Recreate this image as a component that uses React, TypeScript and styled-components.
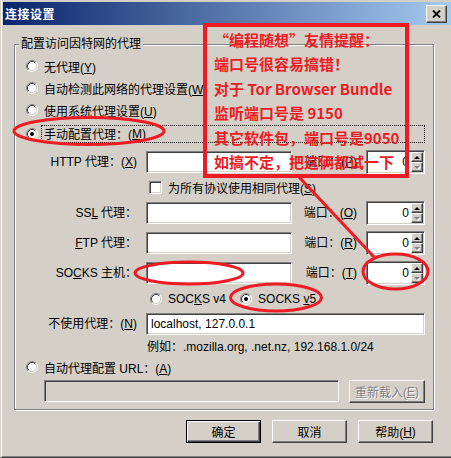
import React from 'react';
import styled, { createGlobalStyle } from 'styled-components';

const GlobalStyle = createGlobalStyle`
  html, body {
    margin: 0;
    padding: 0;
    background: #d4d0c8;
  }
  body {
    font-family: 'Liberation Sans', 'Noto Sans CJK SC', sans-serif;
    font-size: 12px;
    color: #000;
  }
`;

const Window = styled.div`
  position: relative;
  width: 451px;
  height: 458px;
  box-sizing: border-box;
  background: #d4d0c8;
  border-left: 1px solid #d4d0c8;
  border-bottom: 1px solid #404040;
  box-shadow: inset 1px 0 #fff, inset 0 -1px #808080;
  padding: 2px 0 0 2px;
  display: flex;
  flex-direction: column;
  overflow: hidden;
`;

const TitleBar = styled.div`
  height: 23px;
  display: flex;
  align-items: center;
  justify-content: space-between;
  padding: 0 4px 0 2px;
  background: linear-gradient(90deg, #0a246a, #a6caf0);
`;

const TitleText = styled.span`
  color: #fff;
  font-weight: 700;
  font-size: 12px;
  font-family: 'Noto Sans CJK SC', sans-serif;
  letter-spacing: 0.5px;
`;

const CloseButton = styled.div`
  width: 21px;
  height: 18px;
  box-sizing: border-box;
  background: #d4d0c8;
  border: 1px solid;
  border-color: #fff #404040 #404040 #fff;
  box-shadow: inset -1px -1px #808080;
  display: flex;
  align-items: center;
  justify-content: center;
`;

const Body = styled.div`
  padding: 19px 0 0 11px;
  display: flex;
  flex-direction: column;
`;

const GroupBox = styled.div`
  position: relative;
  width: 420px;
  box-sizing: border-box;
  border: 1px solid #808080;
  box-shadow: inset 1px 1px #fff, 1px 1px #fff;
  padding: 10px 8px 7px 11px;
  display: flex;
  flex-direction: column;
`;

const Legend = styled.span`
  position: absolute;
  top: -8px;
  left: 4px;
  padding: 0 2px;
  line-height: 14px;
  background: #d4d0c8;
`;

const RadioLine = styled.div<{ $h?: number; $mt?: number }>`
  display: flex;
  align-items: center;
  gap: 6px;
  height: ${(p) => p.$h ?? 22}px;
  margin-top: ${(p) => p.$mt ?? 0}px;
  white-space: nowrap;
`;

const ManualLine = styled.div`
  display: flex;
  align-items: center;
  height: 19px;
  margin-top: 3px;
`;

const FocusLabel = styled.span`
  flex: 1;
  margin-left: 3px;
  height: 18px;
  box-sizing: border-box;
  border: 1px dotted #000;
  padding-left: 2px;
  display: flex;
  align-items: center;
  white-space: nowrap;
`;

const RadioIcon = styled.svg`
  flex: none;
  display: block;
`;

const Key = styled.span`
  text-decoration: underline;
  text-underline-offset: 1px;
`;

const ProxyGrid = styled.div`
  display: grid;
  grid-template-columns: 111px 146px 56px 59px;
  grid-template-rows: 24px 15px 24px 24px 24px 16px 22px 13px;
  column-gap: 9px;
  row-gap: 6px;
  margin-top: 7px;
  align-items: center;
`;

const FieldLabel = styled.span`
  text-align: right;
  white-space: nowrap;
  line-height: 14px;
`;

const TextBox = styled.input<{ $disabled?: boolean }>`
  height: 22px;
  box-sizing: border-box;
  margin: 0;
  padding: 0 4px;
  font: inherit;
  color: #000;
  background: ${(p) => (p.$disabled ? '#d4d0c8' : '#fff')};
  border: 1px solid;
  border-color: #808080 #fff #fff #808080;
  box-shadow: inset 1px 1px #404040, inset -1px -1px #d4d0c8;
  outline: none;
  min-width: 0;
`;

const WideBox = styled(TextBox)`
  grid-column: 2 / -1;
`;

const PortBox = styled.div`
  height: 24px;
  box-sizing: border-box;
  display: flex;
  background: #fff;
  border: 1px solid;
  border-color: #808080 #fff #fff #808080;
  box-shadow: inset 1px 1px #404040, inset -1px -1px #d4d0c8;
  padding: 1px;
`;

const PortValue = styled.span`
  flex: 1;
  text-align: right;
  padding-right: 2px;
  line-height: 20px;
`;

const SpinColumn = styled.div`
  width: 12px;
  display: flex;
  flex-direction: column;
`;

const SpinButton = styled.div`
  flex: 1;
  box-sizing: border-box;
  background: #d4d0c8;
  border: 1px solid;
  border-color: #fff #404040 #404040 #fff;
  box-shadow: inset -1px -1px #808080;
  display: flex;
  align-items: center;
  justify-content: center;
`;

const Arrow = styled.span<{ $down?: boolean }>`
  width: 0;
  height: 0;
  border-left: 3px solid transparent;
  border-right: 3px solid transparent;
  ${(p) =>
    p.$down
      ? 'border-top: 3px solid #808080; filter: drop-shadow(1px 1px 0 #fff);'
      : 'border-bottom: 3px solid #000;'}
`;

const CheckLine = styled.div`
  grid-column: 2 / -1;
  display: flex;
  align-items: center;
  gap: 6px;
  padding-left: 3px;
  white-space: nowrap;
`;

const CheckBox = styled.span`
  width: 13px;
  height: 13px;
  box-sizing: border-box;
  background: #fff;
  border: 1px solid;
  border-color: #808080 #fff #fff #808080;
  box-shadow: inset 1px 1px #404040, inset -1px -1px #d4d0c8;
`;

const VersionLine = styled.div`
  grid-column: 2 / -1;
  display: flex;
  align-items: center;
  gap: 14px;
  padding-left: 4px;
`;

const VersionOption = styled.span`
  display: inline-flex;
  align-items: center;
  gap: 6px;
  white-space: nowrap;
`;

const Example = styled.span`
  grid-column: 2 / -1;
  padding-left: 1px;
  line-height: 13px;
  white-space: nowrap;
`;

const UrlLine = styled.div`
  display: flex;
  gap: 10px;
  height: 22px;
  margin-top: 6px;
  padding-left: 18px;
`;

const UrlBox = styled(TextBox)`
  width: 295px;
  flex: none;
`;

const ClassicButton = styled.div<{ $default?: boolean; $disabled?: boolean; $w?: number }>`
  width: ${(p) => p.$w ?? 75}px;
  height: 23px;
  flex: none;
  box-sizing: border-box;
  display: flex;
  align-items: center;
  justify-content: center;
  background: #d4d0c8;
  white-space: nowrap;
  color: ${(p) => (p.$disabled ? '#808080' : '#000')};
  text-shadow: ${(p) => (p.$disabled ? '1px 1px 0 #fff' : 'none')};
  border: 1px solid;
  border-color: ${(p) => (p.$default ? '#000' : '#fff #404040 #404040 #fff')};
  box-shadow: ${(p) =>
    p.$default
      ? 'inset 1px 1px #fff, inset -1px -1px #404040, inset -2px -2px #808080'
      : 'inset -1px -1px #808080'};
`;

const ButtonRow = styled.div`
  width: 420px;
  box-sizing: border-box;
  display: flex;
  justify-content: flex-end;
  gap: 11px;
  padding-right: 1px;
  margin-top: 10px;
`;

const Note = styled.div`
  position: absolute;
  left: 202px;
  top: 23px;
  width: 206px;
  height: 155px;
  box-sizing: border-box;
  border: 4px solid #ed1c24;
  padding: 1px 0 0 7px;
  font-family: 'Noto Sans CJK SC', sans-serif;
  font-weight: 700;
  font-size: 15px;
  line-height: 24.4px;
  color: #ed1c24;
  white-space: nowrap;
`;

const Marks = styled.svg`
  position: absolute;
  left: 0;
  top: 0;
  pointer-events: none;
`;

function Radio({ checked }: { checked?: boolean }) {
  return (
    <RadioIcon width="12" height="12" viewBox="0 0 12 12">
      <circle cx="6" cy="6" r="4.5" fill="#fff" />
      <path d="M2.11 9.89A5.5 5.5 0 0 1 9.89 2.11" stroke="#808080" fill="none" />
      <path d="M9.89 2.11A5.5 5.5 0 0 1 2.11 9.89" stroke="#fff" fill="none" />
      <path d="M2.82 9.18A4.5 4.5 0 0 1 9.18 2.82" stroke="#404040" fill="none" />
      <path d="M9.18 2.82A4.5 4.5 0 0 1 2.82 9.18" stroke="#d4d0c8" fill="none" />
      {checked && <circle cx="6" cy="6" r="2" fill="#000" />}
    </RadioIcon>
  );
}

function Port({ label }: { label: React.ReactNode }) {
  return (
    <>
      <FieldLabel>{label}</FieldLabel>
      <PortBox>
        <PortValue>0</PortValue>
        <SpinColumn>
          <SpinButton>
            <Arrow />
          </SpinButton>
          <SpinButton>
            <Arrow $down />
          </SpinButton>
        </SpinColumn>
      </PortBox>
    </>
  );
}

export default function App() {
  return (
    <>
      <GlobalStyle />
      <Window>
        <TitleBar>
          <TitleText>连接设置</TitleText>
          <CloseButton>
            <svg width="9" height="8" viewBox="0 0 9 8">
              <path d="M1 0.5L8 7.5M8 0.5L1 7.5" stroke="#000" strokeWidth="1.8" />
            </svg>
          </CloseButton>
        </TitleBar>

        <Body>
          <GroupBox>
            <Legend>配置访问因特网的代理</Legend>
            <RadioLine>
              <Radio />
              <span>
                无代理(<Key>Y</Key>)
              </span>
            </RadioLine>
            <RadioLine>
              <Radio />
              <span>
                自动检测此网络的代理设置(<Key>W</Key>)
              </span>
            </RadioLine>
            <RadioLine>
              <Radio />
              <span>
                使用系统代理设置(<Key>U</Key>)
              </span>
            </RadioLine>
            <ManualLine>
              <Radio checked />
              <FocusLabel>
                手动配置代理：(<Key>M</Key>)
              </FocusLabel>
            </ManualLine>

            <ProxyGrid>
              <FieldLabel>
                HTTP 代理：(<Key>X</Key>)
              </FieldLabel>
              <TextBox readOnly />
              <Port label={<>端口：(<Key>P</Key>)</>} />

              <CheckLine>
                <CheckBox />
                <span>
                  为所有协议使用相同代理(<Key>S</Key>)
                </span>
              </CheckLine>

              <FieldLabel>
                SS<Key>L</Key> 代理：
              </FieldLabel>
              <TextBox readOnly />
              <Port label={<>端口：(<Key>O</Key>)</>} />

              <FieldLabel>
                <Key>F</Key>TP 代理：
              </FieldLabel>
              <TextBox readOnly />
              <Port label={<>端口：(<Key>R</Key>)</>} />

              <FieldLabel>
                SO<Key>C</Key>KS 主机：
              </FieldLabel>
              <TextBox readOnly />
              <Port label={<>端口：(<Key>T</Key>)</>} />

              <VersionLine>
                <VersionOption>
                  <Radio />
                  <span>
                    SOC<Key>K</Key>S v4
                  </span>
                </VersionOption>
                <VersionOption>
                  <Radio checked />
                  <span>
                    SOCKS <Key>v</Key>5
                  </span>
                </VersionOption>
              </VersionLine>

              <FieldLabel>
                不使用代理：(<Key>N</Key>)
              </FieldLabel>
              <WideBox readOnly defaultValue="localhost, 127.0.0.1" />

              <Example>例如：.mozilla.org, .net.nz, 192.168.1.0/24</Example>
            </ProxyGrid>

            <RadioLine $h={14} $mt={6}>
              <Radio />
              <span>
                自动代理配置 URL：(<Key>A</Key>)
              </span>
            </RadioLine>
            <UrlLine>
              <UrlBox readOnly $disabled />
              <ClassicButton $disabled $w={76}>
                重新载入(<Key>E</Key>)
              </ClassicButton>
            </UrlLine>
          </GroupBox>

          <ButtonRow>
            <ClassicButton $default>确定</ClassicButton>
            <ClassicButton>取消</ClassicButton>
            <ClassicButton>
              帮助(<Key>H</Key>)
            </ClassicButton>
          </ButtonRow>
        </Body>

        <Note>
          <div>“编程随想”友情提醒：</div>
          <div>端口号很容易搞错！</div>
          <div>对于 Tor Browser Bundle</div>
          <div>监听端口号是 9150</div>
          <div>其它软件包，端口号是9050</div>
          <div>如搞不定，把这俩都试一下</div>
        </Note>

        <Marks width="451" height="458" viewBox="0 0 451 458">
          <g fill="none" stroke="#ed1c24" strokeWidth="3">
            <ellipse cx="88" cy="131" rx="75" ry="13.5" />
            <ellipse cx="188" cy="273" rx="54" ry="11" />
            <ellipse cx="394.5" cy="271.5" rx="32.5" ry="17.5" />
            <ellipse cx="275" cy="297.5" rx="45.5" ry="13.5" />
            <line x1="298" y1="177" x2="373" y2="257" />
          </g>
        </Marks>
      </Window>
    </>
  );
}
